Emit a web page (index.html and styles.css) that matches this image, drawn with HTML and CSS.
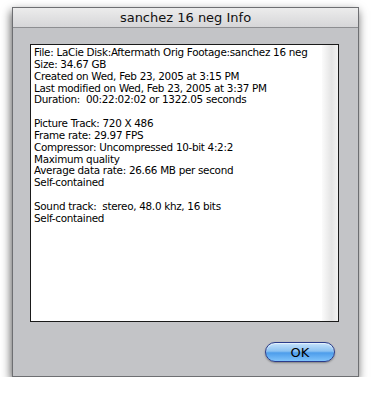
FILE: index.html
```html
<!DOCTYPE html>
<html lang="en">
<head>
  <meta charset="UTF-8">
  <title>sanchez 16 neg Info</title>
  <link rel="stylesheet" href="styles.css">
</head>
<body>
  <div class="window">
    <div class="titlebar">sanchez 16 neg Info</div>
    <div class="content">
      <div class="info-box">
        <div class="info-text">
          <div>File: LaCie Disk:Aftermath Orig Footage:sanchez 16 neg</div>
          <div>Size: 34.67 GB</div>
          <div>Created on Wed, Feb 23, 2005 at 3:15 PM</div>
          <div>Last modified on Wed, Feb 23, 2005 at 3:37 PM</div>
          <div>Duration:&nbsp; 00:22:02:02 or 1322.05 seconds</div>
          <div class="gap"></div>
          <div>Picture Track: 720 X 486</div>
          <div>Frame rate: 29.97 FPS</div>
          <div>Compressor: Uncompressed 10-bit 4:2:2</div>
          <div>Maximum quality</div>
          <div>Average data rate: 26.66 MB per second</div>
          <div>Self-contained</div>
          <div class="gap"></div>
          <div>Sound track:&nbsp; stereo, 48.0 khz, 16 bits</div>
          <div>Self-contained</div>
        </div>
        <div class="scrollbar"></div>
      </div>
      <div class="buttons">
        <button class="ok-button">OK</button>
      </div>
    </div>
  </div>
</body>
</html>
```

FILE: styles.css
```css
body {
  margin: 0;
  background: #fff;
  font-family: "DejaVu Sans", "Liberation Sans", sans-serif;
}
.window {
  margin: 7px 0 0 12px;
  width: 347px;
  height: 370px;
  box-sizing: border-box;
  background: #c3c4c7;
  border: 1px solid #6e6f72;
  box-shadow: -1px 4px 9px rgba(0, 0, 0, 0.65);
  display: flex;
  flex-direction: column;
}
.titlebar {
  height: 20px;
  box-sizing: border-box;
  border-bottom: 1px solid #8d8e91;
  background: linear-gradient(#ececec, #d6d6d8);
  text-align: center;
  font-size: 13px;
  line-height: 20px;
  color: #111;
}
.content {
  flex: 1;
  padding: 16px 19px 15px 17px;
  display: flex;
  flex-direction: column;
}
.info-box {
  height: 278px;
  box-sizing: border-box;
  border: 1px solid #1a1a1a;
  background: #fff;
  display: flex;
}
.info-text {
  flex: 1;
  padding: 2px 3px;
  font-size: 10.4px;
  letter-spacing: -0.3px;
  line-height: 11.85px;
  color: #000;
  white-space: nowrap;
}
.gap {
  height: 11.85px;
}
.scrollbar {
  width: 16px;
  background: linear-gradient(to right, #fbfbfb, #e4e4e4 60%, #f2f2f2);
}
.buttons {
  display: flex;
  justify-content: flex-end;
  margin-top: 20px;
  padding-right: 4px;
}
.ok-button {
  width: 70px;
  height: 20px;
  border: 1px solid #2b3c8a;
  border-radius: 10px;
  background: linear-gradient(#c5e2fb 0%, #8cc2f2 45%, #4d9deb 55%, #7fc3fb 100%);
  box-shadow: 0 1px 2px rgba(0, 0, 0, 0.35), inset 0 1px 1px rgba(255, 255, 255, 0.6);
  font-family: "DejaVu Sans", sans-serif;
  font-size: 13px;
  color: #000;
  padding: 0;
}
```
